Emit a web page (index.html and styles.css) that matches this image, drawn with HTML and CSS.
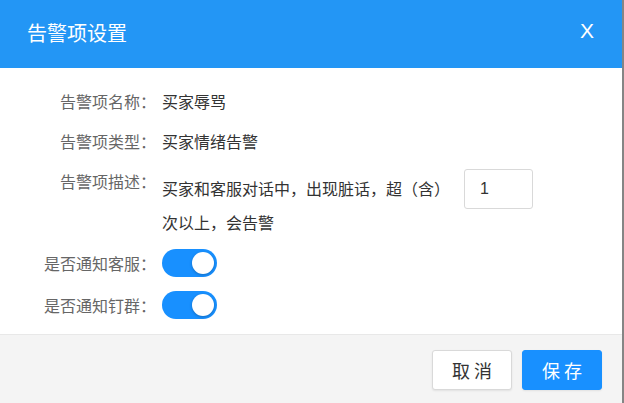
FILE: index.html
```html
<!DOCTYPE html>
<html lang="zh-CN">
<head>
    <meta charset="UTF-8">
    <meta name="viewport" content="width=device-width, initial-scale=1.0">
    <title>告警项设置</title>
    <link rel="stylesheet" href="styles.css">
</head>
<body>
    <div class="dialog">
        <div class="dialog-header">
            <span class="dialog-title">告警项设置</span>
            <span class="dialog-close">X</span>
        </div>

        <div class="dialog-body">
            <div class="form-row">
                <div class="form-label">告警项名称：</div>
                <div class="form-value">买家辱骂</div>
            </div>
            <div class="form-row">
                <div class="form-label">告警项类型：</div>
                <div class="form-value">买家情绪告警</div>
            </div>
            <div class="form-row desc-row">
                <div class="form-label">告警项描述：</div>
                <div class="form-value desc-value">买家和客服对话中，出现脏话，超（含）<input type="text" class="count-input" value="1"> <span class="nowrap">次以上，会告警</span></div>
            </div>
            <div class="form-row switch-row">
                <div class="form-label">是否通知客服：</div>
                <div class="form-value"><span class="switch on"><span class="switch-knob"></span></span></div>
            </div>
            <div class="form-row switch-row">
                <div class="form-label">是否通知钉群：</div>
                <div class="form-value"><span class="switch on"><span class="switch-knob"></span></span></div>
            </div>
        </div>

        <div class="dialog-footer">
            <button class="btn">取消</button>
            <button class="btn btn-primary">保存</button>
        </div>
    </div>
</body>
</html>
```

FILE: styles.css
```css
html, body {
    margin: 0;
    padding: 0;
    height: 100%;
}
body {
    background-color: #858585;
    font-family: "Noto Sans CJK SC", "Liberation Sans", sans-serif;
    font-size: 16px;
    color: #333;
}
.dialog {
    width: 622px;
    height: 100%;
    background-color: #fff;
    display: flex;
    flex-direction: column;
}
.dialog-header {
    height: 68px;
    flex-shrink: 0;
    background-color: #2396f5;
    color: #fff;
    display: flex;
    align-items: center;
    justify-content: space-between;
    padding: 0 28px 0 27px;
}
.dialog-title {
    font-size: 20px;
    margin-top: -4px;
}
.dialog-close {
    font-family: "Liberation Sans", sans-serif;
    font-size: 21px;
    margin-top: -7px;
    cursor: pointer;
}
.dialog-body {
    padding: 13px 0 8px;
}
.form-row {
    display: flex;
    align-items: flex-start;
}
.form-label {
    width: 156px;
    flex-shrink: 0;
    text-align: right;
    color: #666;
    line-height: 40px;
}
.form-value {
    margin-left: 6px;
    line-height: 40px;
    flex: 1;
}
.desc-value {
    line-height: 26px;
    padding: 8px 40px 7px 0;
}
.nowrap {
    white-space: nowrap;
}
.count-input {
    box-sizing: border-box;
    width: 69px;
    height: 40px;
    margin-left: 14px;
    padding: 0 15px;
    border: 1px solid #d9d9d9;
    border-radius: 3px;
    font-family: "Liberation Sans", sans-serif;
    font-size: 16px;
    color: #333;
    vertical-align: 1px;
}
.switch-row {
    height: 42px;
    align-items: center;
}
.switch-row .form-label,
.switch-row .form-value {
    line-height: 42px;
}
.switch-row .form-value {
    display: flex;
    align-items: center;
}
.switch {
    position: relative;
    display: inline-block;
    width: 55px;
    height: 28px;
    border-radius: 14px;
    background-color: #ccc;
}
.switch.on {
    background-color: #1890ff;
}
.switch-knob {
    position: absolute;
    top: 3px;
    left: 3px;
    width: 22px;
    height: 22px;
    border-radius: 50%;
    background-color: #fff;
    box-shadow: 0 1px 3px rgba(0, 0, 0, 0.25);
}
.switch.on .switch-knob {
    left: 30px;
}
.dialog-footer {
    flex: 1;
    background-color: #f4f4f4;
    border-top: 1px solid #e8e8e8;
    display: flex;
    justify-content: flex-end;
    align-items: flex-start;
    gap: 10px;
    padding: 15px 20px 0;
}
.btn {
    width: 80px;
    height: 40px;
    border: 1px solid #d9d9d9;
    border-radius: 3px;
    background-color: #fff;
    color: #333;
    font-family: "Noto Sans CJK SC", sans-serif;
    font-size: 18px;
    letter-spacing: 4px;
    text-indent: 4px;
    box-shadow: 0 1px 2px rgba(0, 0, 0, 0.08);
    cursor: pointer;
}
.btn-primary {
    background-color: #1890ff;
    border-color: #1890ff;
    color: #fff;
}
```
